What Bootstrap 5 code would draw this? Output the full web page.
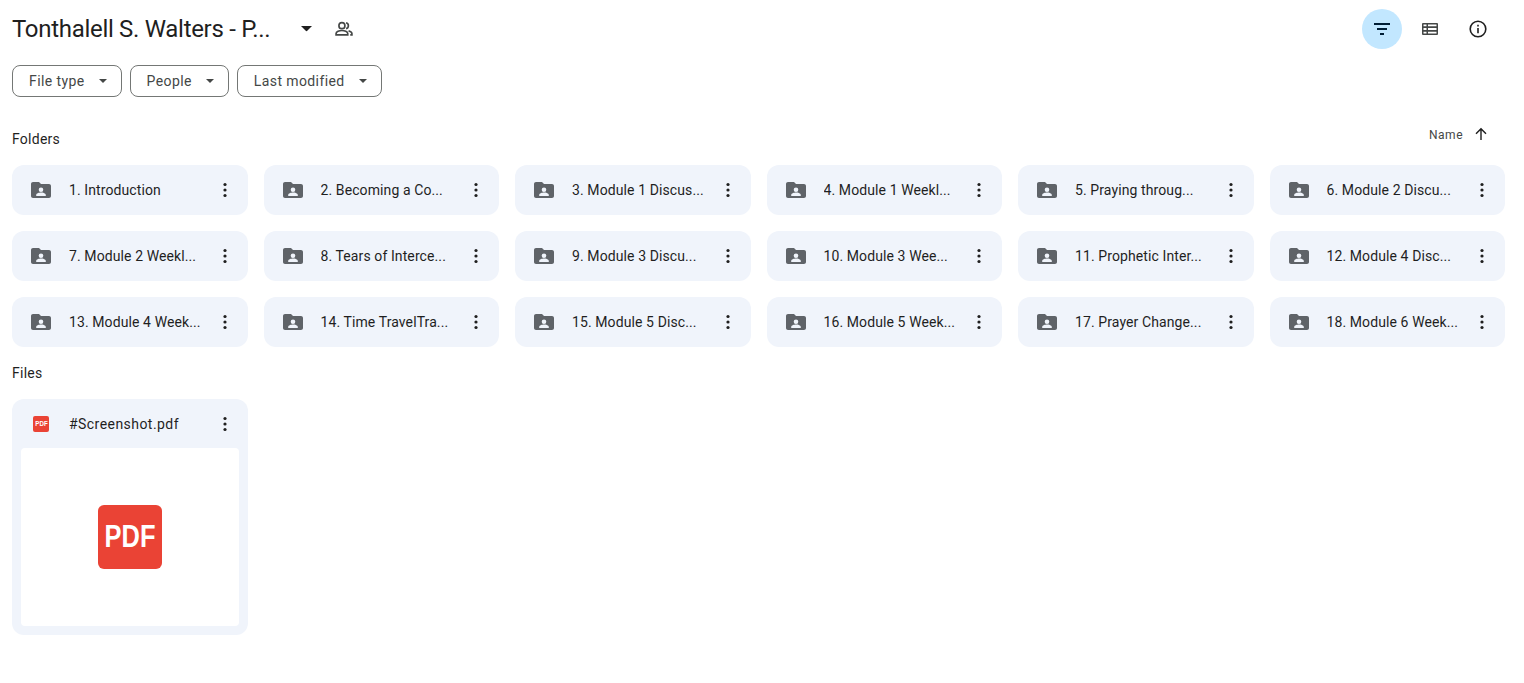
<!DOCTYPE html>
<html lang="en">
<head>
  <meta charset="UTF-8" />
  <meta name="viewport" content="width=device-width, initial-scale=1.0" />
  <title>Tonthalell S. Walters - Drive</title>
  <link href="https://cdn.jsdelivr.net/npm/bootstrap@5.3.3/dist/css/bootstrap.min.css" rel="stylesheet">
  <style>
    body {
      font-family: Roboto, "Liberation Sans", sans-serif;
      background: #fff;
      color: #1f1f1f;
      font-size: 14px;
      letter-spacing: 0.1px;
    }
    .drive-page { padding: 9px 19px 0 12px; }
    .head-row { height: 40px; }
    .drive-title {
      font-size: 24px;
      font-weight: 400;
      line-height: 40px;
      width: 289px;
      margin: 0;
      white-space: nowrap;
      letter-spacing: -0.3px;
    }
    .people-icon { margin-left: 22px; }
    .tool-btn {
      width: 40px;
      height: 40px;
      border-radius: 50%;
      border: 0;
      padding: 0;
      background: transparent;
      margin-left: 8px;
    }
    .tool-btn.on { background: #c2e7ff; }
    .tool-wrap { margin-right: 7px; }
    .filter-row { margin-top: 16px; gap: 8px; height: 32px; }
    .chip-btn {
      height: 32px;
      border: 1px solid #747775;
      border-radius: 8px;
      background: #fff;
      color: #444746;
      font-size: 14px;
      padding: 0 14px 0 16px;
      letter-spacing: 0.4px;
    }
    .chip-caret { margin-left: 14px; }
    .section-head { color: #1f1f1f; font-size: 14px; font-weight: 400; margin: 0; letter-spacing: 0.25px; }
    .folder-head { margin-top: 26px; height: 32px; }
    .sort-name { font-size: 12px; color: #444746; margin-right: 11px; padding-top: 2px; letter-spacing: 0.5px; }
    .sort-wrap { margin-right: 17px; margin-top: -10px; }
    .folder-grid {
      display: grid;
      grid-template-columns: repeat(6, 1fr);
      gap: 16px;
      margin-top: 10px;
    }
    .folder-tile {
      height: 50px;
      background: #f0f4fb;
      border-radius: 12px;
      padding: 0 13px 0 17px;
    }
    .tile-name {
      margin-left: 16px;
      flex: 1;
      min-width: 0;
      white-space: nowrap;
      overflow: hidden;
      text-overflow: ellipsis;
      color: #1f1f1f;
      font-size: 14px;
    }
    .files-head { margin-top: 17px; height: 18px; line-height: 18px; }
    .file-tile {
      width: 236px;
      height: 236px;
      margin-top: 17px;
      background: #f0f4fb;
      border-radius: 12px;
      padding: 0 9px 9px;
    }
    .file-top { height: 49px; padding: 1px 4px 0 12px; }
    .file-top .tile-name { margin-left: 20px; letter-spacing: 0.45px; }
    .file-thumb { height: 178px; background: #fff; border-radius: 4px; }
    .pdf-big, .pdf-small {
      background: #ea4335;
      color: #fff;
      font-family: "Liberation Sans", sans-serif;
      font-weight: 700;
      letter-spacing: 0;
      text-align: center;
      flex: none;
    }
    .pdf-big {
      width: 64px;
      height: 64px;
      border-radius: 6px;
      font-size: 31px;
      line-height: 64px;
    }
    .pdf-small {
      width: 16px;
      height: 16px;
      border-radius: 2px;
      font-size: 7.5px;
      line-height: 16px;
    }
    .pdf-letters { display: inline-block; transform: scaleX(0.82); }
  </style>
</head>
<body>
  <svg width="0" height="0" class="position-absolute">
    <symbol id="folderShared" viewBox="0 0 24 24">
      <path fill="#5f6368" d="M20 6h-8l-2-2H4c-1.1 0-2 .9-2 2v12c0 1.1.9 2 2 2h16c1.1 0 2-.9 2-2V8c0-1.1-.9-2-2-2zm-8 3.5a2.3 2.3 0 1 1 0 4.6 2.3 2.3 0 0 1 0-4.6zM16.8 18H7.2v-1c0-1.6 3.2-2.4 4.8-2.4s4.8.8 4.8 2.4v1z"/>
    </symbol>
    <symbol id="moreDots" viewBox="0 0 20 20">
      <circle cx="10" cy="4.5" r="1.6" fill="#1f1f1f"/>
      <circle cx="10" cy="10" r="1.6" fill="#1f1f1f"/>
      <circle cx="10" cy="15.5" r="1.6" fill="#1f1f1f"/>
    </symbol>
    <symbol id="caretDown" viewBox="0 0 10 5">
      <path fill="currentColor" d="M0 0h10L5 5z"/>
    </symbol>
  </svg>

  <div class="drive-page">
    <!-- Titulo y botones de vista -->
    <div class="head-row d-flex align-items-center">
      <h1 class="drive-title">Tonthalell S. Walters - P...</h1>
      <svg width="11" height="5.500" style="color:#1f1f1f"><use href="#caretDown"/></svg>
      <svg class="people-icon" width="20" height="20" viewBox="0 0 24 24" fill="none" stroke="#444746" stroke-width="2">
        <circle cx="9.5" cy="8" r="3.6"/>
        <path d="M2.5 19v-1.5c0-2.4 4-3.7 7-3.7s7 1.300 7 3.700V19z"/>
        <path d="M14.500 4.500a3.600 3.600 0 0 1 0 7M17.500 14.200c2.200.6 4 1.700 4 3.300V19h-2"/>
      </svg>
      <div class="ms-auto d-flex tool-wrap">
        <button class="tool-btn on d-flex align-items-center justify-content-center" type="button" aria-label="Filters">
          <svg width="16" height="12" viewBox="0 0 16 12"><path fill="#001d35" d="M0 0h16v2H0zM3 5h10v2H3zM6 10h4v2H6z"/></svg>
        </button>
        <button class="tool-btn d-flex align-items-center justify-content-center" type="button" aria-label="Details view">
          <svg width="16" height="12" viewBox="0 0 16 12"><path fill="#444746" fill-rule="evenodd" d="M1 0h14a1 1 0 0 1 1 1v10a1 1 0 0 1-1 1H1a1 1 0 0 1-1-1V1a1 1 0 0 1 1-1zm.5 1.500V3.300h3V1.500zm4.500 0V3.300h8.500V1.500zM1.500 5.100v1.800h3V5.100zm4.500 0v1.800h8.500V5.100zM1.500 8.700v1.800h3V8.700zm4.500 0v1.800h8.500V8.700z"/></svg>
        </button>
        <button class="tool-btn d-flex align-items-center justify-content-center" type="button" aria-label="Info">
          <svg width="20" height="20" viewBox="0 0 20 20" fill="none"><circle cx="10" cy="10" r="7.800" stroke="#1f1f1f" stroke-width="1.600"/><path fill="#1f1f1f" d="M9.200 9h1.600v5.200H9.200zM9.200 5.800h1.600v1.600H9.200z"/></svg>
        </button>
      </div>
    </div>

    <!-- Filtros -->
    <div class="filter-row d-flex">
      <button class="chip-btn d-flex align-items-center" type="button">File type<svg class="chip-caret" width="8" height="4"><use href="#caretDown"/></svg></button>
      <button class="chip-btn d-flex align-items-center" type="button">People<svg class="chip-caret" width="8" height="4"><use href="#caretDown"/></svg></button>
      <button class="chip-btn d-flex align-items-center" type="button">Last modified<svg class="chip-caret" width="8" height="4"><use href="#caretDown"/></svg></button>
    </div>

    <!-- Carpetas -->
    <div class="folder-head d-flex align-items-center justify-content-between">
      <h2 class="section-head">Folders</h2>
      <div class="sort-wrap d-flex align-items-center">
        <span class="sort-name">Name</span>
        <svg width="14" height="14" viewBox="0 0 14 14"><path fill="#1f1f1f" d="M7.700 13H6.300V3.400L2.500 7.200 1.500 6.200 7 .7l5.500 5.500-1 1-3.800-3.800z"/></svg>
      </div>
    </div>
    <div class="folder-grid" id="folderGrid"></div>

    <!-- Archivos -->
    <h2 class="section-head files-head">Files</h2>
    <div class="file-tile">
      <div class="file-top d-flex align-items-center">
        <div class="pdf-small"><span class="pdf-letters">PDF</span></div>
        <div class="tile-name">#Screenshot.pdf</div>
        <svg width="20" height="20"><use href="#moreDots"/></svg>
      </div>
      <div class="file-thumb d-flex align-items-center justify-content-center">
        <div class="pdf-big"><span class="pdf-letters">PDF</span></div>
      </div>
    </div>
  </div>

  <script src="https://cdn.jsdelivr.net/npm/bootstrap@5.3.3/dist/js/bootstrap.bundle.min.js"></script>
  <script>
    const folders = [
      "1. Introduction", "2. Becoming a Co...", "3. Module 1 Discus...", "4. Module 1 Weekl...", "5. Praying throug...", "6. Module 2 Discu...",
      "7. Module 2 Weekl...", "8. Tears of Interce...", "9. Module 3 Discu...", "10. Module 3 Wee...", "11. Prophetic Inter...", "12. Module 4 Disc...",
      "13. Module 4 Week...", "14. Time TravelTra...", "15. Module 5 Disc...", "16. Module 5 Week...", "17. Prayer Change...", "18. Module 6 Week..."
    ];
    const grid = document.getElementById("folderGrid");
    folders.forEach(name => {
      const tile = document.createElement("div");
      tile.className = "folder-tile d-flex align-items-center";
      tile.innerHTML = `<svg width="24" height="24" class="flex-shrink-0"><use href="#folderShared"/></svg>
        <div class="tile-name">${name}</div>
        <svg width="20" height="20" class="flex-shrink-0"><use href="#moreDots"/></svg>`;
      grid.appendChild(tile);
    });
  </script>
</body>
</html>
